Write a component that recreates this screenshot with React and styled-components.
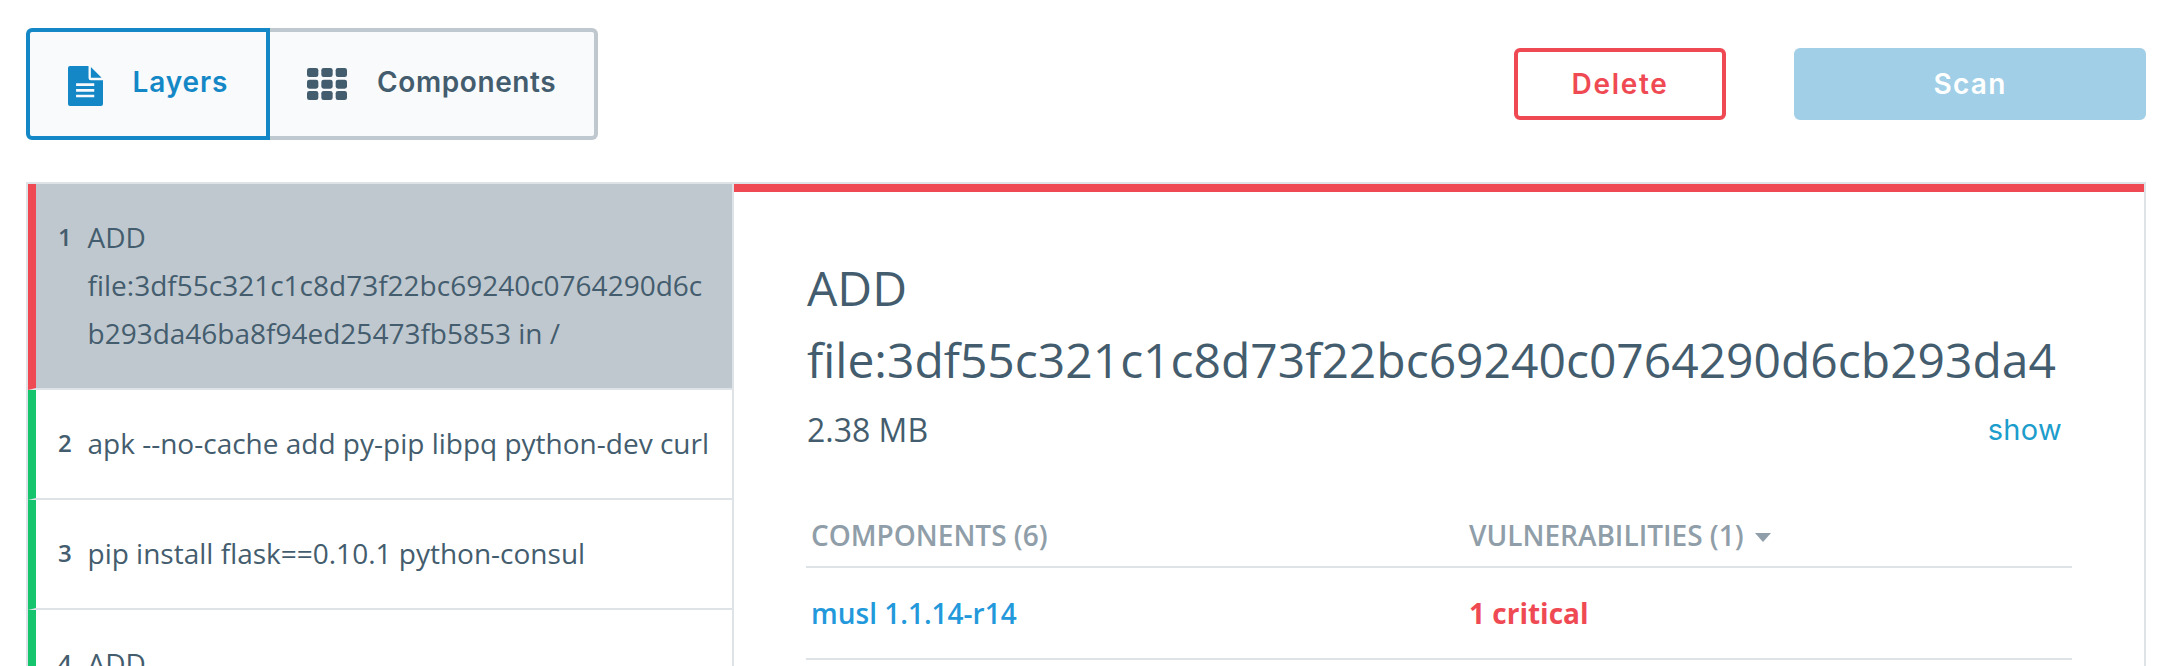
import React from "react";
import styled, { createGlobalStyle } from "styled-components";

const color = {
  text: "#445d6e",
  muted: "#8f9ea8",
  line: "#dee3e7",
  selected: "#c0c8cf",
  blue: "#1488c6",
  link: "#2399dc",
  teal: "#1c9dcc",
  red: "#ef4a53",
  green: "#15c46c",
};

const GlobalStyle = createGlobalStyle`
  *, *::before, *::after { box-sizing: border-box; }
  body {
    margin: 0;
    background: #fff;
    color: ${color.text};
    font-family: "Open Sans", sans-serif;
  }
  button { font: inherit; margin: 0; cursor: pointer; }
`;

const Page = styled.main`
  display: flex;
  flex-direction: column;
  gap: 42px;
  height: 666px;
  padding: 28px 26px 0;
  overflow: hidden;
`;

const Toolbar = styled.header`
  display: flex;
  justify-content: space-between;
  flex: none;
  height: 112px;
`;

const Tabs = styled.nav`
  display: flex;
`;

const Tab = styled.button`
  display: flex;
  align-items: center;
  width: ${(p) => p.$width}px;
  padding: 0 0 0 ${(p) => (p.$active ? 38 : 37)}px;
  background: #f9fafc;
  color: ${(p) => (p.$active ? color.blue : color.text)};
  border: 4px solid ${(p) => (p.$active ? color.blue : color.selected)};
  border-radius: ${(p) => (p.$active ? "6px 0 0 6px" : "0 6px 6px 0")};
  ${(p) => !p.$active && "border-left: 0;"}

  svg {
    flex: none;
    display: block;
    margin-top: ${(p) => (p.$active ? 3 : 0)}px;
  }
`;

const TabLabel = styled.span`
  margin-left: ${(p) => p.$gap}px;
  padding-bottom: 4px;
  font: 600 28px/34px Inter, sans-serif;
  letter-spacing: ${(p) => p.$tracking}px;
`;

const Actions = styled.div`
  display: flex;
  align-items: center;
  gap: 68px;
`;

const Button = styled.button`
  height: 72px;
  width: ${(p) => p.$width}px;
  padding: 0;
  border-radius: 6px;
  border: 4px solid ${(p) => (p.$primary ? "#a1cfe7" : color.red)};
  background: ${(p) => (p.$primary ? "#a1cfe7" : "#fff")};
  color: ${(p) => (p.$primary ? "#fff" : color.red)};
  font: 600 28px/34px Inter, sans-serif;
  letter-spacing: ${(p) => (p.$primary ? 1.3 : 1.7)}px;
`;

const Panel = styled.section`
  display: flex;
  flex: none;
  height: 600px;
  border: 2px solid ${color.line};
`;

const LayerList = styled.ol`
  width: 706px;
  margin: 0;
  padding: 0;
  list-style: none;
  border-right: 2px solid ${color.line};
`;

const Layer = styled.li`
  display: flex;
  padding: 29px 0 31px 22px;
  border-left: 8px solid ${(p) => (p.$critical ? color.red : color.green)};
  border-bottom: 2px solid ${color.line};
  background: ${(p) => (p.$selected ? color.selected : "#fff")};
`;

const LayerNumber = styled.span`
  flex: none;
  width: 29.5px;
  font-size: 24px;
  font-weight: 600;
  line-height: 48px;
`;

const LayerCommand = styled.span`
  width: 628px;
  font-size: 28px;
  line-height: 48px;
  word-wrap: break-word;
`;

const Detail = styled.article`
  flex: 1;
  min-width: 0;
  padding: 60px 72px 0;
  border-top: 8px solid ${color.red};
`;

const Title = styled.h1`
  margin: 0;
  padding-left: 1px;
  height: 144px;
  overflow: hidden;
  font-size: 48px;
  font-weight: 400;
  line-height: 72px;
  word-break: break-word;
`;

const Summary = styled.div`
  display: flex;
  justify-content: space-between;
  align-items: baseline;
  padding: 10px 10px 0 1px;
  line-height: 48px;
  font-size: 32px;
`;

const ShowLink = styled.a`
  color: ${color.teal};
  font: 400 29px/36px Inter, sans-serif;
  letter-spacing: 0.3px;
  position: relative;
  top: -2px;
`;

const Row = styled.div`
  display: grid;
  grid-template-columns: 658px 1fr;
  align-items: center;
  height: 92px;
  padding: 0 5px;
  border-bottom: 2px solid ${color.line};
  font-size: 28px;
  font-weight: 600;
  line-height: 38px;
`;

const HeadRow = styled(Row)`
  height: 54px;
  margin-top: 60px;
  padding-bottom: 10px;
  color: ${color.muted};
`;

const SortableCell = styled.span`
  display: flex;
  align-items: center;
  gap: 11px;

  svg { margin-top: 4px; }
`;

const ComponentLink = styled.a`
  color: ${color.link};
`;

const Severity = styled.span`
  color: ${color.red};
  font-weight: 700;
`;

const DocumentIcon = () => (
  <svg width="35" height="40" viewBox="0 0 104 120" preserveAspectRatio="none" fill="currentColor">
    <path
      fillRule="evenodd"
      d="M6 0H61V36Q61 43 68 43H104V114Q104 120 98 120H6Q0 120 0 114V6Q0 0 6 0ZM24 52V60H78V52ZM24 69V77H78V69ZM24 86V94H78V86Z"
    />
    <path d="M68 3V35H100Z" />
  </svg>
);

const GridIcon = () => (
  <svg width="40" height="32" viewBox="0 0 120 96" fill="currentColor">
    {[0, 35, 69].map((y) =>
      [0, 43, 86].map((x) => <rect key={`${x}-${y}`} x={x} y={y} width="34" height="27" rx="7" />)
    )}
  </svg>
);

const CaretIcon = () => (
  <svg width="16" height="9" viewBox="0 0 16 9" fill="currentColor">
    <path d="M0 0H16L8 9Z" />
  </svg>
);

const layers = [
  {
    command: "ADD file:3df55c321c1c8d73f22bc69240c0764290d6cb293da46ba8f94ed25473fb5853 in /",
    critical: true,
  },
  { command: "apk --no-cache add py-pip libpq python-dev curl" },
  { command: "pip install flask==0.10.1 python-consul" },
  { command: "ADD" },
];

export default function App() {
  return (
    <>
      <GlobalStyle />
      <Page>
        <Toolbar>
          <Tabs>
            <Tab $active $width={244}>
              <DocumentIcon />
              <TabLabel $gap={29.5} $tracking={0.9}>Layers</TabLabel>
            </Tab>
            <Tab $width={328}>
              <GridIcon />
              <TabLabel $gap={30} $tracking={0.6}>Components</TabLabel>
            </Tab>
          </Tabs>
          <Actions>
            <Button $width={212}>Delete</Button>
            <Button $primary $width={352}>Scan</Button>
          </Actions>
        </Toolbar>
        <Panel>
          <LayerList>
            {layers.map((layer, i) => (
              <Layer key={i} $critical={layer.critical} $selected={i === 0}>
                <LayerNumber>{i + 1}</LayerNumber>
                <LayerCommand>{layer.command}</LayerCommand>
              </Layer>
            ))}
          </LayerList>
          <Detail>
            <Title>ADD file:3df55c321c1c8d73f22bc69240c0764290d6cb293da4</Title>
            <Summary>
              <span>2.38 MB</span>
              <ShowLink>show</ShowLink>
            </Summary>
            <HeadRow>
              <span>COMPONENTS (6)</span>
              <SortableCell>
                VULNERABILITIES (1)
                <CaretIcon />
              </SortableCell>
            </HeadRow>
            <Row>
              <ComponentLink>musl 1.1.14-r14</ComponentLink>
              <Severity>1 critical</Severity>
            </Row>
          </Detail>
        </Panel>
      </Page>
    </>
  );
}
